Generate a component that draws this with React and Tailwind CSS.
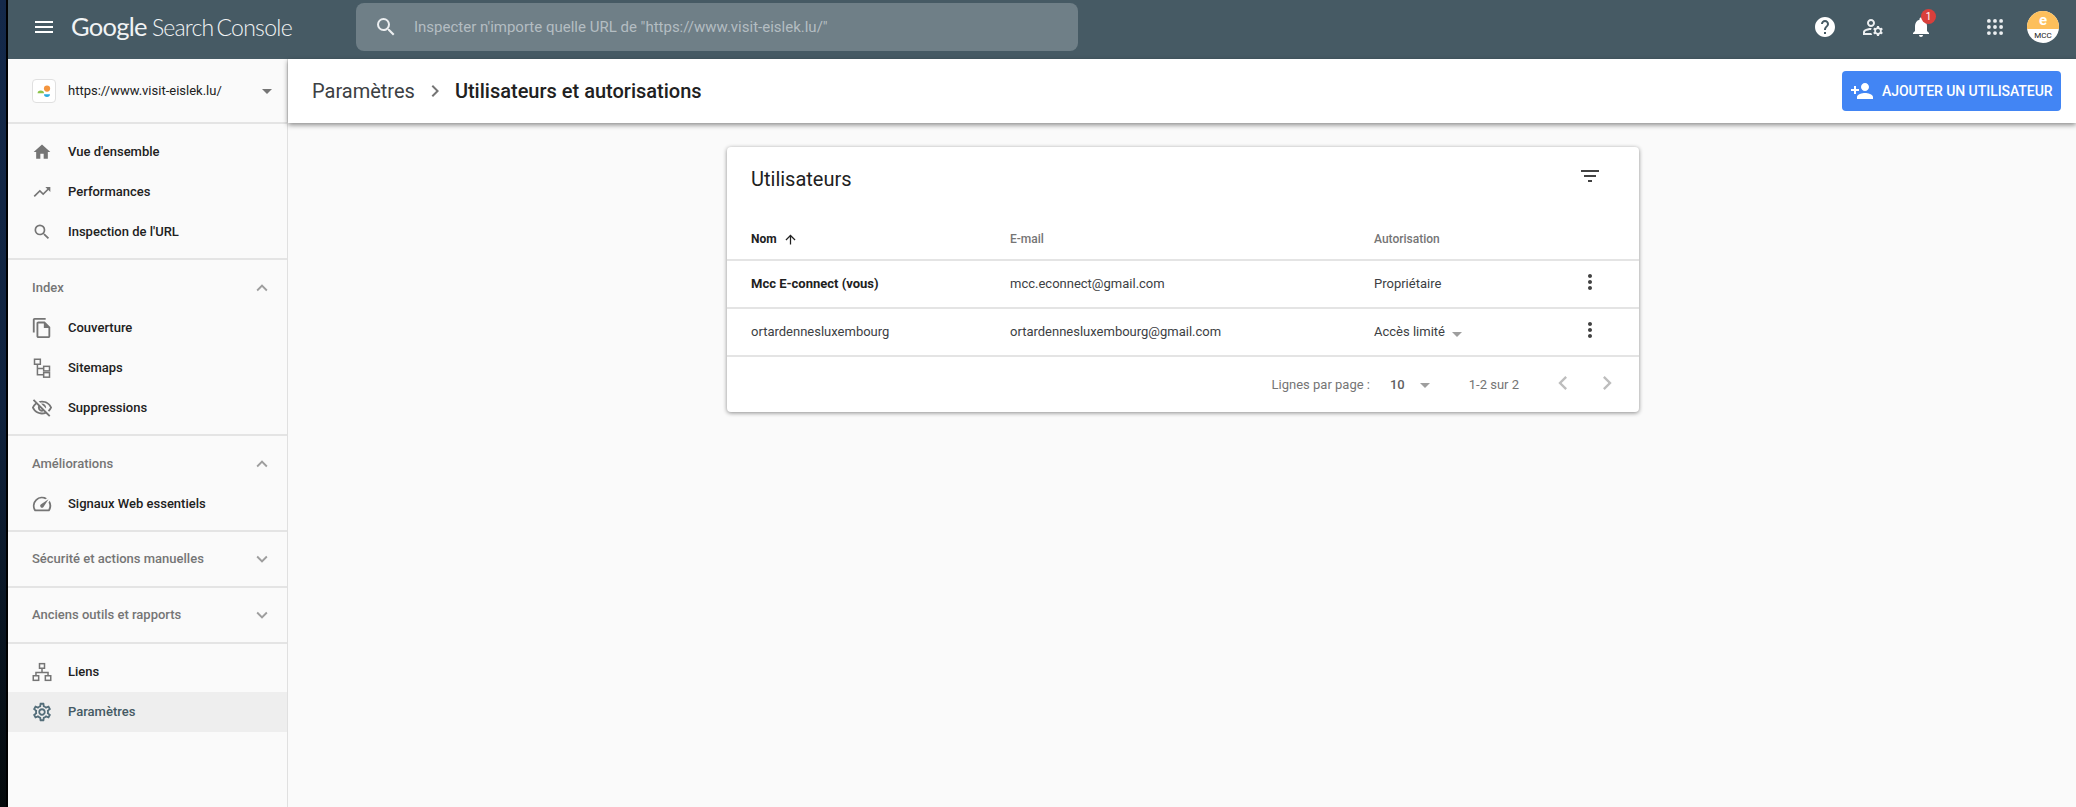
import React from 'react';
import {
  MdMenu, MdSearch, MdHelp, MdOutlineManageAccounts, MdNotifications, MdPersonAdd, MdArrowDropDown,
  MdHome, MdTrendingUp, MdOutlineFileCopy, MdOutlineVisibilityOff, MdOutlineSpeed, MdExpandLess, MdExpandMore,
  MdOutlineSettings, MdChevronRight, MdChevronLeft, MdFilterList, MdArrowUpward, MdMoreVert,
} from 'react-icons/md';

function SitemapIcon({ className }) {
  return (
    <svg viewBox="0 0 24 24" className={className} fill="none" stroke="currentColor" strokeWidth="1.8">
      <rect x="3" y="1.5" width="7" height="6" />
      <rect x="14" y="10" width="7" height="5.5" />
      <rect x="14" y="17.5" width="7" height="5.5" />
      <path d="M6.5 7.5v12.5h7.5M6.5 12.5h7.5" />
    </svg>
  );
}

function LinksIcon({ className }) {
  return (
    <svg viewBox="0 0 24 24" className={className} fill="none" stroke="currentColor" strokeWidth="1.8">
      <rect x="9" y="2" width="6" height="5.5" />
      <rect x="1.5" y="16.5" width="6.5" height="5.5" />
      <rect x="16" y="16.5" width="6.5" height="5.5" />
      <path d="M12 7.5v5M4.75 16.5v-4h14.5v4" />
    </svg>
  );
}

function AppsIcon({ className }) {
  const dots = [5, 12, 19];
  return (
    <svg viewBox="0 0 24 24" className={className} fill="currentColor">
      {dots.map((y) => dots.map((x) => <circle key={`${x}-${y}`} cx={x} cy={y} r="2.2" />))}
    </svg>
  );
}

function NavItem({ icon: Icon, label, active, large }) {
  return (
    <div className={`flex h-10 items-center pl-6 ${active ? 'bg-[#eeeeee] text-[#455a64]' : 'text-[#212121]'}`}>
      <Icon className={`${large ? '-mx-px h-[22px] w-[22px]' : 'h-5 w-5'} ${active ? 'text-[#546e7a]' : 'text-[#757575]'}`} />
      <span className="ml-4 text-[13px] font-medium">{label}</span>
    </div>
  );
}

function SectionTitle({ label, open }) {
  const Chevron = open ? MdExpandLess : MdExpandMore;
  return (
    <div className="flex h-10 items-center justify-between pl-6 pr-[14px] text-[#757575]">
      <span className="text-[13px] font-medium">{label}</span>
      <Chevron className="h-[22px] w-[22px] text-[#9e9e9e]" />
    </div>
  );
}

function Sidebar() {
  return (
    <aside className="flex w-[280px] shrink-0 flex-col border-r border-[#e0e0e0] bg-[#fafafa]">
      <div className="flex h-[65px] shrink-0 items-center border-b-2 border-[#e4e4e4] pl-6 pr-2">
        <div className="flex h-6 w-6 items-center justify-center rounded-sm border border-[#e0e0e0] bg-white">
          <svg viewBox="0 0 24 24" className="h-[22px] w-[22px]">
            <circle cx="15.3" cy="9.3" r="3.4" fill="#f4953f" />
            <path d="M5 14.5a3.5 3 0 0 1 7 0z" fill="#8bc34a" />
            <path d="M12 15.5h6.5a3.25 3 0 0 1-6.5 0z" fill="#29a9e1" />
          </svg>
        </div>
        <span className="ml-3 flex-1 text-[13px] text-[#212121]">https://www.visit-eislek.lu/</span>
        <MdArrowDropDown className="h-6 w-6 text-[#757575]" />
      </div>

      <div className="border-b-2 border-[#e4e4e4] pb-[6px] pt-2">
        <NavItem icon={MdHome} label="Vue d'ensemble" />
        <NavItem icon={MdTrendingUp} label="Performances" />
        <NavItem icon={MdSearch} label="Inspection de l'URL" />
      </div>

      <div className="border-b-2 border-[#e4e4e4] pb-[6px] pt-2">
        <SectionTitle label="Index" open />
        <NavItem icon={MdOutlineFileCopy} label="Couverture" large />
        <NavItem icon={SitemapIcon} label="Sitemaps" />
        <NavItem icon={MdOutlineVisibilityOff} label="Suppressions" large />
      </div>

      <div className="border-b-2 border-[#e4e4e4] pb-[6px] pt-2">
        <SectionTitle label="Améliorations" open />
        <NavItem icon={MdOutlineSpeed} label="Signaux Web essentiels" large />
      </div>

      <div className="flex h-[56px] shrink-0 flex-col justify-center border-b-2 border-[#e4e4e4]">
        <SectionTitle label="Sécurité et actions manuelles" />
      </div>
      <div className="flex h-[56px] shrink-0 flex-col justify-center border-b-2 border-[#e4e4e4]">
        <SectionTitle label="Anciens outils et rapports" />
      </div>

      <div className="pt-2">
        <NavItem icon={LinksIcon} label="Liens" />
        <NavItem icon={MdOutlineSettings} label="Paramètres" active large />
      </div>
    </aside>
  );
}

function UsersCard() {
  const rowClass = 'grid h-12 grid-cols-[283px_364px_204px_24px] items-center border-t-2 border-[#e4e4e4] text-[13px] text-[#3c4043]';

  return (
    <div className="mx-auto mt-6 w-[912px] rounded-sm bg-white shadow-[0_1px_4px_rgba(0,0,0,0.45)]">
      <div className="flex h-16 items-start justify-between pl-6 pr-[37px]">
        <h2 className="mt-[20px] text-[20px] font-normal leading-6 text-[#212121]">Utilisateurs</h2>
        <MdFilterList className="mt-[17px] h-6 w-6 text-[#424242]" />
      </div>

      <div className="grid h-12 grid-cols-[283px_364px_204px_24px] items-center pt-2 text-[12px] font-medium text-[#757575]">
        <div className="flex items-center pl-6 font-bold text-[#212121]">
          Nom
          <MdArrowUpward className="ml-[6px] h-[15px] w-[15px]" />
        </div>
        <div>E-mail</div>
        <div>Autorisation</div>
      </div>

      <div className={rowClass}>
        <div className="pl-6 font-bold text-[#212121]">Mcc E-connect (vous)</div>
        <div>mcc.econnect@gmail.com</div>
        <div>Propriétaire</div>
        <MdMoreVert className="-mt-1 h-6 w-6 text-[#424242]" />
      </div>
      <div className={rowClass}>
        <div className="pl-6">ortardennesluxembourg</div>
        <div>ortardennesluxembourg@gmail.com</div>
        <div className="flex items-center">
          Accès limité
          <MdArrowDropDown className="mt-[3px] h-6 w-6 text-[#9e9e9e]" />
        </div>
        <MdMoreVert className="-mt-1 h-6 w-6 text-[#424242]" />
      </div>

      <div className="flex h-[57px] items-center justify-end border-t-2 border-[#e4e4e4] pr-[18px] text-[13px] text-[#757575]">
        <span>Lignes par page :</span>
        <span className="ml-5 font-medium text-[#616161]">10</span>
        <MdArrowDropDown className="ml-2 h-6 w-6 text-[#9e9e9e]" />
        <span className="ml-8">1-2 sur 2</span>
        <MdChevronLeft className="-mt-1 ml-[30px] h-7 w-7 text-[#bdbdbd]" />
        <MdChevronRight className="-mt-1 ml-4 h-7 w-7 text-[#bdbdbd]" />
      </div>
    </div>
  );
}

export default function App() {
  return (
    <div className="flex h-screen overflow-hidden bg-[#fafafa] font-['Roboto',sans-serif]">
      <div className="w-2 shrink-0 border-r-2 border-black bg-gradient-to-b from-[#14294a] via-[#10233f] to-[#050a0c]"></div>

      <div className="flex min-w-0 flex-1 flex-col">
        <header className="flex h-[59px] shrink-0 items-start bg-[#465a64] text-white">
          <div className="flex h-[54px] w-[348px] shrink-0 items-center pl-6">
            <MdMenu className="h-6 w-6" />
            <div className="ml-[15px] flex items-baseline whitespace-nowrap font-['Lato',sans-serif] leading-none text-[#f1f3f4]">
              <span className="text-[25.5px] font-normal tracking-[-0.7px]">Google</span>
              <span className="ml-[5px] text-[23px] font-light tracking-[-0.8px]">Search</span>
              <span className="ml-[3px] text-[23px] font-light tracking-[-0.7px]">Console</span>
            </div>
          </div>

          <div className="mt-[3px] flex h-12 w-[722px] items-center rounded-lg bg-[#6f7f87] pl-[18px] text-[#b4bdc2]">
            <MdSearch className="h-6 w-6 text-[#eceff1]" />
            <span className="ml-4 text-[15px]">Inspecter n'importe quelle URL de "https://www.visit-eislek.lu/"</span>
          </div>

          <div className="ml-auto flex h-[54px] items-center pr-[17px]">
            <MdHelp className="h-6 w-6" />
            <MdOutlineManageAccounts className="ml-6 h-6 w-6 text-[#eceff1]" />
            <div className="relative ml-6 h-6 w-6">
              <MdNotifications className="h-6 w-6" />
              <span className="absolute left-[12px] top-[-6px] flex h-[15px] w-[15px] items-center justify-center rounded-full bg-[#d93f3b] text-[10px] leading-none">1</span>
            </div>
            <AppsIcon className="ml-[50px] h-6 w-6 scale-[0.87] text-[#eceff1]" />
            <div className="ml-5 flex h-8 w-8 flex-col overflow-hidden rounded-full bg-white">
              <div className="flex h-[18px] items-center justify-center bg-[#fdbf5b] text-[15px] font-bold leading-none text-white">e</div>
              <div className="flex flex-1 items-center justify-center text-[8px] leading-none text-[#212121]">MCC</div>
            </div>
          </div>
        </header>

        <div className="flex min-h-0 flex-1">
          <Sidebar />

          <main className="min-w-0 flex-1">
            <div className="flex h-16 items-center justify-between bg-white pl-[24px] pr-[15px] shadow-[0_2px_5px_rgba(0,0,0,0.45)]">
              <div className="flex items-center text-[20px] text-[#212121]">
                <span className="font-normal text-[#3c4043]">Paramètres</span>
                <MdChevronRight className="mx-[8px] h-6 w-6 text-[#757575]" />
                <span className="font-medium">Utilisateurs et autorisations</span>
              </div>
              <button className="flex h-10 w-[219px] items-center rounded-sm bg-[#4285f4] pl-2 text-[14px] font-medium uppercase tracking-[-0.05px] text-white">
                <MdPersonAdd className="h-6 w-6" />
                <span className="ml-[8px]">Ajouter un utilisateur</span>
              </button>
            </div>

            <div className="pl-[2px]">
              <UsersCard />
            </div>
          </main>
        </div>
      </div>
    </div>
  );
}
